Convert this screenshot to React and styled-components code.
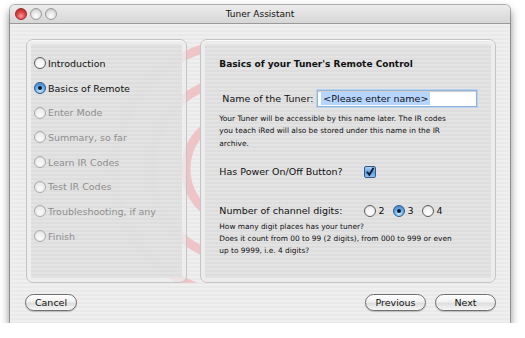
import React from 'react';
import styled, { createGlobalStyle } from 'styled-components';

const steps = [
  { label: 'Introduction', enabled: true },
  { label: 'Basics of Remote', enabled: true, current: true },
  { label: 'Enter Mode' },
  { label: 'Summary, so far' },
  { label: 'Learn IR Codes' },
  { label: 'Test IR Codes' },
  { label: 'Troubleshooting, if any' },
  { label: 'Finish' },
];

const GlobalStyle = createGlobalStyle`
  body {
    margin: 0;
    background: #ffffff;
    font-family: "DejaVu Sans", "Open Sans", sans-serif;
  }
`;

const Window = styled.div`
  margin: 5px 0 0 10px;
  width: 500px;
  height: 318px;
  border-radius: 5px 5px 1px 1px;
  box-shadow: 0 0 0 1px rgba(90, 90, 90, 0.45), 0 5px 10px rgba(0, 0, 0, 0.55);
  overflow: hidden;
  display: flex;
  flex-direction: column;
`;

const TitleBar = styled.div`
  position: relative;
  height: 18px;
  flex: none;
  display: flex;
  align-items: center;
  justify-content: center;
  background: linear-gradient(#ececec, #d6d6d6);
  border-bottom: 1px solid #9a9a9a;
  font-size: 9px;
  color: #111;
`;

const Lights = styled.div`
  position: absolute;
  left: 5px;
  top: 3px;
  display: flex;
  gap: 3px;
`;

const Light = styled.span`
  width: 12px;
  height: 12px;
  border-radius: 50%;
  box-sizing: border-box;
  border: 1px solid ${(p) => (p.red ? '#9c2b2b' : '#9b9b9b')};
  background: ${(p) =>
    p.red
      ? 'radial-gradient(circle at 50% 70%, #ff9a9a 0%, #e04848 45%, #a91a1a 100%)'
      : 'radial-gradient(circle at 50% 70%, #ffffff 0%, #e4e4e4 50%, #b9b9b9 100%)'};
`;

const Body = styled.div`
  flex: 1;
  display: flex;
  flex-direction: column;
  padding: 15px 14px 0 16px;
  background: repeating-linear-gradient(#efefef 0 2px, #e9e9e9 2px 4px);
`;

const Panels = styled.div`
  position: relative;
  overflow: hidden;
  display: flex;
  gap: 13px;
  height: 244px;
`;

const Rings = styled.svg`
  position: absolute;
  left: -16px;
  top: -15px;
  z-index: 0;
`;

const Panel = styled.div`
  position: relative;
  z-index: 1;
  box-sizing: border-box;
  width: ${(p) => p.w}px;
  padding: 4px;
  border: 1px solid #c4c4c4;
  border-radius: 7px;
  background: ${(p) => (p.see ? 'rgba(238, 238, 238, 0.75)' : '#ececec')};
  box-shadow: inset 0 1px 0 #fafafa;
  display: flex;
`;

const Inner = styled.div`
  flex: 1;
  border-radius: 2px;
  background: ${(p) =>
    p.see
      ? 'repeating-linear-gradient(rgba(226,226,226,0.93) 0 2px, rgba(220,220,220,0.93) 2px 4px)'
      : 'repeating-linear-gradient(#e3e3e3 0 2px, #dddddd 2px 4px)'};
  padding: ${(p) => p.pad};
  display: flex;
  flex-direction: column;
`;

const Step = styled.div`
  height: 24.7px;
  display: flex;
  align-items: center;
  gap: 2px;
  font-size: 9.5px;
  color: ${(p) => (p.enabled ? '#111' : '#8e8e8e')};
`;

const Radio = styled.span`
  width: 12px;
  height: 12px;
  flex: none;
  box-sizing: border-box;
  border-radius: 50%;
  display: flex;
  align-items: center;
  justify-content: center;
  border: 1px solid ${(p) => (p.on ? '#35598a' : p.dim ? '#a9a9a9' : '#5c5c5c')};
  background: ${(p) =>
    p.on
      ? 'radial-gradient(circle at 50% 75%, #c9ecff 0%, #6fb2ea 45%, #2f6fc0 100%)'
      : p.dim
      ? 'radial-gradient(circle at 50% 70%, #fbfbfb 0%, #ececec 60%, #d6d6d6 100%)'
      : 'radial-gradient(circle at 50% 70%, #ffffff 0%, #f2f2f2 55%, #cfcfcf 100%)'};
  &::after {
    content: '';
    display: ${(p) => (p.on ? 'block' : 'none')};
    width: 4px;
    height: 4px;
    border-radius: 50%;
    background: #0b1a33;
  }
`;

const Heading = styled.div`
  font-size: 9px;
  font-weight: bold;
  color: #111;
  margin-bottom: 21px;
`;

const FieldRow = styled.div`
  display: flex;
  align-items: center;
  gap: ${(p) => p.gap || 0}px;
  font-size: 9.5px;
  color: #111;
  padding-left: ${(p) => p.indent || 0}px;
  margin-top: ${(p) => p.top || 0}px;
`;

const Input = styled.div`
  width: 160px;
  height: 17px;
  box-sizing: border-box;
  background: #fff;
  border: 1px solid #8fb3dc;
  box-shadow: 0 0 0 1px #b9d3ef, inset 0 1px 1px rgba(0, 0, 0, 0.2);
  display: flex;
  align-items: center;
  padding-left: 3px;
  font-size: 9.5px;
`;

const Selected = styled.span`
  background: #b5d5ff;
  padding: 1px 2px;
`;

const Help = styled.p`
  margin: ${(p) => p.m || '0'};
  font-size: 7.4px;
  line-height: 12.3px;
  color: #111;
`;

const Check = styled.span`
  width: 12px;
  height: 12px;
  box-sizing: border-box;
  border: 1px solid #35598a;
  border-radius: 2px;
  background: linear-gradient(#a9d3f7, #5a9be0 55%, #8cc4f2);
  display: flex;
  align-items: center;
  justify-content: center;
`;

const Digits = styled.div`
  display: flex;
  align-items: center;
  gap: 8px;
  margin-left: 21px;
`;

const Digit = styled.label`
  display: flex;
  align-items: center;
  gap: 3px;
`;

const Footer = styled.div`
  display: flex;
  align-items: center;
  gap: 9px;
  margin-top: 11px;
  margin-left: -1px;
`;

const Button = styled.button`
  width: ${(p) => p.w}px;
  height: 17px;
  border-radius: 9px;
  border: 1px solid #6f6f6f;
  background: linear-gradient(#ffffff, #f1f1f1 45%, #dedede 55%, #f6f6f6);
  box-shadow: 0 1px 1px rgba(0, 0, 0, 0.2);
  font-family: "DejaVu Sans", sans-serif;
  font-size: 9.5px;
  color: #111;
  padding: 0;
  margin-left: ${(p) => (p.push ? 'auto' : '0')};
`;

export default function App() {
  return (
    <>
      <GlobalStyle />
      <Window>
        <TitleBar>
          <Lights>
            <Light red />
            <Light />
            <Light />
          </Lights>
          Tuner Assistant
        </TitleBar>
        <Body>
          <Panels>
            <Rings width="500" height="300" viewBox="0 0 500 300">
              <g fill="none" stroke="#eec4c6" strokeWidth="9">
                <circle cx="230" cy="145" r="54" />
                <circle cx="230" cy="145" r="90" />
                <circle cx="230" cy="145" r="126" />
              </g>
            </Rings>
            <Panel w={162} see>
              <Inner see pad="7px 0 0 3px">
                {steps.map((s) => (
                  <Step key={s.label} enabled={s.enabled}>
                    <Radio on={s.current} dim={!s.enabled} />
                    {s.label}
                  </Step>
                ))}
              </Inner>
            </Panel>
            <Panel w={297}>
              <Inner pad="15px 10px 0 14px">
                <Heading>Basics of your Tuner's Remote Control</Heading>
                <FieldRow indent={3} gap={4}>
                  Name of the Tuner:
                  <Input>
                    <Selected>&lt;Please enter name&gt;</Selected>
                  </Input>
                </FieldRow>
                <Help m="6px 0 0 0">
                  Your Tuner will be accessible by this name later. The IR codes
                  <br />
                  you teach iRed will also be stored under this name in the IR
                  <br />
                  archive.
                </Help>
                <FieldRow gap={21} top={16}>
                  Has Power On/Off Button?
                  <Check>
                    <svg width="10" height="10" viewBox="0 0 10 10">
                      <path d="M2 4.8 L4.3 7.8 L8.6 0.8" fill="none" stroke="#0b1a33" strokeWidth="1.8" />
                    </svg>
                  </Check>
                </FieldRow>
                <FieldRow top={27}>
                  Number of channel digits:
                  <Digits>
                    <Digit>
                      <Radio />2
                    </Digit>
                    <Digit>
                      <Radio on />3
                    </Digit>
                    <Digit>
                      <Radio />4
                    </Digit>
                  </Digits>
                </FieldRow>
                <Help m="4px 0 0 0">
                  How many digit places has your tuner?
                  <br />
                  Does it count from 00 to 99 (2 digits), from 000 to 999 or even
                  <br />
                  up to 9999, i.e. 4 digits?
                </Help>
              </Inner>
            </Panel>
          </Panels>
          <Footer>
            <Button w={52}>Cancel</Button>
            <Button w={61} push>
              Previous
            </Button>
            <Button w={61}>Next</Button>
          </Footer>
        </Body>
      </Window>
    </>
  );
}
